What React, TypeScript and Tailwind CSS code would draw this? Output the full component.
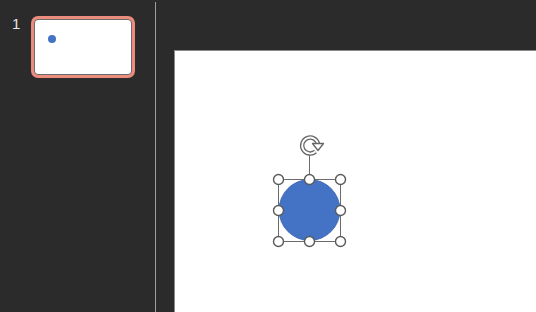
import React from "react";

const Selection = () => (
  <svg
    className="absolute left-[90px] top-[83px]"
    width="90"
    height="122"
    viewBox="265 134 90 122"
  >
    {/* rotate handle stem */}
    <line x1="309.5" y1="155" x2="309.5" y2="179" stroke="#6b6b6b" strokeWidth="1" />
    {/* rotate icon */}
    <path
      d="M 315.5 151.5 A 8 8 0 1 1 318 144"
      fill="none"
      stroke="#666666"
      strokeWidth="4.4"
    />
    <path
      d="M 315.5 151.5 A 8 8 0 1 1 318 144"
      fill="none"
      stroke="#ffffff"
      strokeWidth="1.8"
    />
    <path d="M 312.5 143.5 L 323.5 143.5 L 318 150.5 Z" fill="#ffffff" stroke="#666666" strokeWidth="1.3" strokeLinejoin="round" />
    {/* shape */}
    <circle cx="309.5" cy="210" r="30.5" fill="#4472c4" stroke="#3b64ae" strokeWidth="0.8" />
    {/* bounding box */}
    <rect x="278.5" y="179.5" width="62" height="62" fill="none" stroke="#6b6b6b" strokeWidth="1" />
    {[
      [278.5, 179.5],
      [309.5, 179.5],
      [340.5, 179.5],
      [278.5, 210.5],
      [340.5, 210.5],
      [278.5, 241.5],
      [309.5, 241.5],
      [340.5, 241.5],
    ].map(([x, y], i) => (
      <circle key={i} cx={x} cy={y} r="5" fill="#ffffff" stroke="#5a5a5a" strokeWidth="1.4" />
    ))}
  </svg>
);

const App = () => {
  return (
    <div className="flex h-[312px] w-[536px] overflow-hidden bg-[#2b2b2b] font-['Liberation_Sans',sans-serif]">
      {/* Slide thumbnails */}
      <div className="flex w-[155px] items-start pt-[16px]">
        <div className="w-[31px] pl-[12px] text-[15px] leading-[16px] text-[#e6e6e6]">1</div>
        <div className="h-[62px] w-[104px] rounded-[7px] border-[3px] border-[#ec8c7d] bg-[#ec8c7d]">
          <div className="h-full w-full rounded-[4px] border border-[#6a6a6a] bg-white pl-[13px] pt-[15px]">
            <div className="h-[8px] w-[8px] rounded-full bg-[#4472c4]" />
          </div>
        </div>
      </div>
      {/* divider */}
      <div className="mt-[2px] w-px bg-[#9e9e9e]" />
      {/* editing area */}
      <div className="flex flex-1 pl-[18px] pt-[50px]">
        <div className="relative flex-1 border-l border-t border-[#8a8a8a] bg-white">
          <Selection />
        </div>
      </div>
    </div>
  );
};

export default App;
